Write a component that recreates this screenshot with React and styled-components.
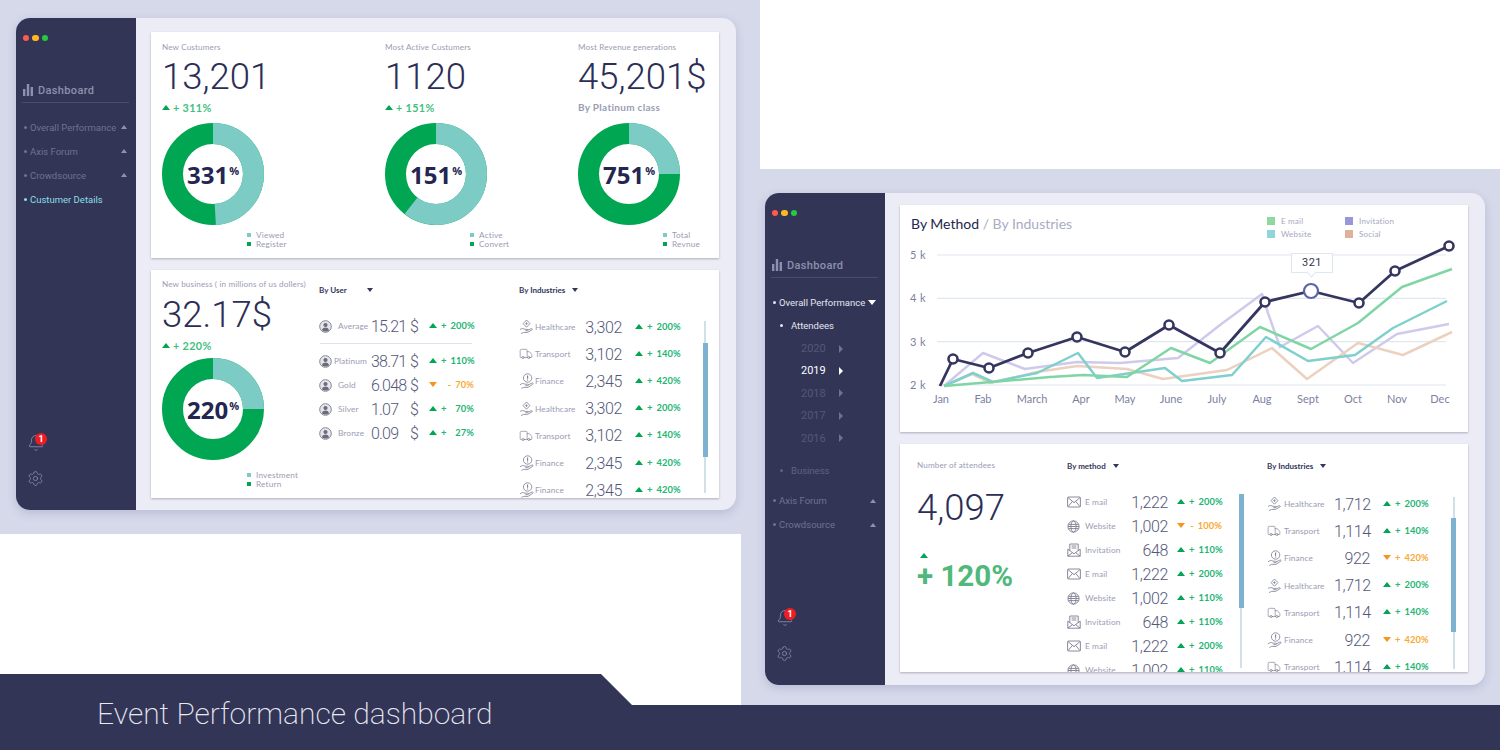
import React from 'react'
import styled, { createGlobalStyle } from 'styled-components'
import { Bell, Settings, Truck } from 'lucide-react'

const GlobalStyle = createGlobalStyle`
html, body {
  margin: 0;
  padding: 0;
  overflow: hidden;
  font-family: "Lato", "Liberation Sans", sans-serif;
}
`

const Stage = styled.div`
width: 1500px;
height: 750px;
background: #d6d9ea;
display: grid;
grid-template-columns: 741px 19px 740px;
grid-template-rows: 169px 365px 140px 31px 45px;
overflow: hidden;
`

const WhiteTop = styled.div`
grid-column: 3;
grid-row: 1;
background: #fff;
`

const WhiteBottom = styled.div`
grid-column: 1;
grid-row: 3 / 5;
background: #fff;
`

const Banner = styled.div`
grid-column: 1 / 4;
grid-row: 4 / 6;
background: #333557;
clip-path: polygon(0 0, 601px 0, 632px 31px, 100% 31px, 100% 100%, 0 100%);
color: #e8e9f2;
font-family: "Roboto", sans-serif;
font-weight: 200;
font-size: 30px;
line-height: 36px;
padding: 22px 0 0 97px;
`

const Window = styled.div`
grid-column: ${p => p.$col};
grid-row: ${p => p.$row};
margin: ${p => p.$margin};
width: 720px;
height: 492px;
align-self: start;
justify-self: start;
display: flex;
border-radius: 14px;
overflow: hidden;
background: #ebecf5;
box-shadow: 0 3px 10px rgba(80, 85, 130, 0.22);
z-index: 1;
`

const Sidebar = styled.div`
width: 120px;
box-sizing: border-box;
background: #333557;
padding: 17px 7px 0 6px;
display: flex;
flex-direction: column;
font-family: "Roboto", sans-serif;
`

const Dots = styled.div`
display: flex;
gap: 3px;
margin-left: 1px;
`

const Dot = styled.span`
width: 6.4px;
height: 6.4px;
border-radius: 50%;
background: ${p => p.$color};
`

const NavTitle = styled.div`
margin-top: 37px;
height: 24px;
display: flex;
align-items: center;
gap: 5px;
padding-left: 1px;
border-bottom: 1px solid #494b70;
color: #8e90ad;
font-size: 11px;
font-weight: 500;
letter-spacing: 0.35px;
`

const Menu = styled.div`
margin-top: 12px;
display: flex;
flex-direction: column;
`

const MenuItem = styled.div`
height: ${p => p.$height || 24}px;
margin-top: ${p => p.$top || 0}px;
padding-left: ${p => p.$indent || 2}px;
display: flex;
align-items: center;
font-size: 9.5px;
white-space: nowrap;
color: ${p => p.$color || '#6f7192'};
`

const Bullet = styled.span`
width: 3px;
height: 3px;
border-radius: 50%;
background: currentColor;
margin-right: ${p => p.$gap || 3}px;
flex-shrink: 0;
`

const Triangle = styled.span`
display: inline-block;
width: 0;
height: 0;
flex-shrink: 0;
${p => p.$dir === 'right' ? `
  border-top: 4px solid transparent;
  border-bottom: 4px solid transparent;
  border-left: 4px solid ${p.$color};
` : `
  border-left: ${p.$size}px solid transparent;
  border-right: ${p.$size}px solid transparent;
  border-${p.$dir === 'up' ? 'bottom' : 'top'}: ${p.$size + 1}px solid ${p.$color};
`}
`

const MenuCaret = styled.span`
margin-left: auto;
margin-right: 2px;
display: flex;
`

const Year = styled.div`
height: 22.4px;
padding-left: 30px;
display: flex;
align-items: center;
gap: 13px;
font-size: 11px;
color: ${p => (p.$on ? '#ffffff' : '#55577a')};
`

const SideBottom = styled.div`
margin-top: auto;
padding: 0 0 23px 5px;
display: flex;
flex-direction: column;
gap: 18px;
color: #8e90ad;
`

const BellWrap = styled.div`
position: relative;
width: 18px;
height: 18px;
`

const Badge = styled.span`
position: absolute;
left: 8px;
top: -1px;
width: 12px;
height: 12px;
border-radius: 50%;
background: #f01c24;
color: #fff;
font-size: 9px;
font-weight: 700;
line-height: 12px;
text-align: center;
`

const Main = styled.div`
flex: 1;
padding: ${p => p.$top}px 17px 0 15px;
display: flex;
flex-direction: column;
gap: 12px;
`

const Card = styled.div`
height: ${p => p.$height}px;
flex-shrink: 0;
background: #fff;
box-shadow: 0 1px 2px rgba(60, 60, 80, 0.35);
overflow: hidden;
position: relative;
`

const StatGrid = styled.div`
height: 100%;
display: grid;
grid-template-columns: ${p => p.$cols};
padding-left: ${p => p.$pad || 11}px;
`

const Column = styled.div`
display: flex;
flex-direction: column;
min-width: 0;
`

const Label = styled.div`
padding-top: ${p => p.$top || 9}px;
font-size: 8.1px;
line-height: 12px;
color: #9a9cb5;
letter-spacing: 0.15px;
white-space: nowrap;
`

const BigNumber = styled.div`
margin-top: ${p => p.$top || 6}px;
font-family: "Roboto", sans-serif;
font-weight: 300;
font-size: 36.5px;
line-height: 36px;
color: #2b2e55;
white-space: nowrap;
`

const Delta = styled.div`
margin-top: 5px;
height: 14px;
display: flex;
align-items: center;
gap: 3px;
font-size: 10.8px;
font-weight: 700;
letter-spacing: 0.35px;
color: #3fbf7f;
`

const SubNote = styled.div`
margin-top: 5px;
height: 14px;
line-height: 14px;
font-size: 10px;
font-weight: 700;
letter-spacing: 0.3px;
color: #9a9cb5;
`

const DonutWrap = styled.div`
position: relative;
width: 102px;
height: 102px;
margin-top: ${p => p.$top}px;
`

const DonutText = styled.div`
position: absolute;
inset: 0;
display: flex;
align-items: center;
justify-content: center;
font-family: "Open Sans", sans-serif;
font-weight: 700;
font-size: 24px;
color: #232650;
`

const Percent = styled.span`
font-size: 11px;
font-weight: 700;
margin: -7px 0 0 1px;
`

const Legend = styled.div`
margin: ${p => p.$top || 5}px 0 0 85px;
display: flex;
flex-direction: column;
`

const LegendRow = styled.div`
height: 9px;
display: flex;
align-items: center;
gap: 5px;
font-size: 8.2px;
color: #9a9cb5;
letter-spacing: 0.2px;
`

const LegendMark = styled.span`
width: 4px;
height: 4px;
background: ${p => p.$color};
`

const DropHead = styled.div`
padding-top: ${p => p.$top || 14}px;
height: 12px;
display: flex;
align-items: center;
gap: ${p => p.$gap || 7}px;
font-size: 8px;
font-weight: 700;
color: #34365a;
white-space: nowrap;
`

const ListArea = styled.div`
margin-top: ${p => p.$top}px;
display: flex;
align-items: flex-start;
`

const Rows = styled.div`
width: ${p => p.$width}px;
flex-shrink: 0;
`

const Row = styled.div`
height: ${p => p.$height}px;
display: grid;
grid-template-columns: ${p => p.$cols};
align-items: center;
color: #9a9cb5;
font-size: 8.3px;
letter-spacing: 0.1px;
white-space: nowrap;
`

const RowIcon = styled.span`
display: flex;
color: #7b7d90;
`

const RowLabel = styled.span`
padding-left: ${p => p.$pad || 0}px;
`

const Amount = styled.span`
font-family: "Roboto", sans-serif;
font-weight: 300;
font-size: 16px;
letter-spacing: -0.35px;
color: #55587a;
text-align: right;
`

const Money = styled(Amount)`
display: flex;
justify-content: space-between;
letter-spacing: -0.8px;
`

const RowDelta = styled.span`
display: flex;
align-items: center;
gap: 4px;
margin: 0 0 2px ${p => p.$gap}px;
font-size: 9.3px;
font-weight: 700;
color: ${p => (p.$down ? '#f7a934' : '#22b573')};
`

const DeltaText = styled.span`
width: 33px;
display: flex;
justify-content: ${p => (p.$joined ? 'flex-end' : 'space-between')};
gap: 4px;
`

const Divider = styled.div`
width: 152px;
height: 1px;
background: #dde3ec;
margin: 5px 0 5px 1px;
`

const Track = styled.div`
position: relative;
width: 2px;
height: ${p => p.$height}px;
margin-top: ${p => p.$top}px;
background: #cfe0e8;
`

const Thumb = styled.div`
position: absolute;
left: -1.5px;
top: ${p => p.$top}px;
width: 5px;
height: 114px;
background: #7db3d0;
`

const TitleRow = styled.div`
height: 35px;
box-sizing: border-box;
padding: 9px 0 0 11px;
display: grid;
grid-template-columns: 356px 1fr;
`

const Title = styled.div`
font-size: 14px;
line-height: 20px;
color: #24264c;
`

const TitleDim = styled.span`
color: #a9abc5;
`

const ChartLegend = styled.div`
display: grid;
grid-template-columns: 78px 1fr;
grid-auto-rows: 13.5px;
`

const ChartKey = styled.div`
display: flex;
align-items: center;
gap: 6px;
font-size: 8px;
letter-spacing: 0.2px;
color: #a5a7c2;
`

const KeySwatch = styled.span`
width: 8px;
height: 8px;
background: ${p => p.$color};
`

const ChartBox = styled.div`
position: relative;
height: 192px;
`

const ChartSvg = styled.svg`
display: block;
`

const Tip = styled.div`
position: absolute;
left: 391px;
top: 13px;
width: 42px;
height: 20px;
box-sizing: border-box;
border: 1px solid #dfe7ef;
background: #fff;
font-family: "Roboto", sans-serif;
font-size: 11px;
line-height: 18px;
letter-spacing: 0.5px;
text-align: center;
color: #33354f;
&::after {
  content: '';
  position: absolute;
  left: 16px;
  bottom: -4px;
  width: 6px;
  height: 6px;
  background: #fff;
  border-right: 1px solid #dfe7ef;
  border-bottom: 1px solid #dfe7ef;
  transform: rotate(45deg);
}
`

const HugeDelta = styled.div`
font-family: "Roboto", sans-serif;
font-weight: 700;
font-size: 29.5px;
line-height: 32px;
margin-top: 2px;
color: #4fb87a;
white-space: nowrap;
`

const ArrowSlot = styled.div`
margin: 27px 0 0 3px;
display: flex;
`

const TEAL = '#7ccbc4'
const GREEN = '#00a651'

const BarsIcon = () => (
  <svg width="10" height="12" viewBox="0 0 10 12" fill="#8e90ad">
    <rect x="0" y="5" width="2.4" height="7" />
    <rect x="3.8" y="0" width="2.4" height="12" />
    <rect x="7.6" y="3" width="2.4" height="9" />
  </svg>
)

const PersonIcon = () => (
  <svg width="13" height="13" viewBox="0 0 13 13">
    <circle cx="6.5" cy="6.5" r="5.8" fill="#e6e6ea" stroke="#77798a" strokeWidth="0.9" />
    <circle cx="6.5" cy="5" r="2.1" fill="#6b6d7e" />
    <path d="M2.9 10.2c.6-1.9 2-2.6 3.6-2.6s3 .7 3.6 2.6c-2 1.6-5.2 1.6-7.2 0z" fill="#6b6d7e" />
  </svg>
)

const HealthIcon = () => (
  <svg width="15" height="16" viewBox="0 0 15 16" fill="none" stroke="#7b7d90" strokeWidth="0.8">
    <path d="M7.5 1l3.4 3.6-3.4 3.6-3.4-3.6z" />
    <path d="M7.5 3.4v2.4M6.3 4.6h2.4" />
    <path d="M1 10.4c2-1.2 3.6-.9 5 0h2.4c1 0 1 1.3 0 1.3H6.4" />
    <path d="M8.6 11.2l3.6-1.5c1.1-.4 1.6.7.7 1.2l-4.4 2.5H4.6L2 14.6" />
  </svg>
)

const FinanceIcon = () => (
  <svg width="16" height="16" viewBox="0 0 16 16" fill="none" stroke="#7b7d90" strokeWidth="0.8">
    <circle cx="8.6" cy="5" r="4.2" />
    <path d="M8.6 2.6v3.2M8.6 6.6v.8" strokeWidth="1.1" />
    <path d="M1 12c1.6-1.8 3.4-1.8 5-.8h2.6c1 0 1 1.4 0 1.4H6.4" />
    <path d="M9 12l3.9-1.9c1.1-.5 1.6.7.7 1.3l-4.6 3H4.6L2.4 15.4" />
  </svg>
)

const TruckIcon = () => <Truck size={14} strokeWidth={1.1} />

const MailIcon = () => (
  <svg width="14" height="12" viewBox="0 0 14 12" fill="none" stroke="#7b7d90" strokeWidth="0.9">
    <rect x="0.6" y="1" width="12.8" height="10" rx="0.8" />
    <path d="M1 1.6l6 5 6-5M1 10.6l4.4-5.2M13 10.6L8.6 5.4" />
  </svg>
)

const GlobeIcon = () => (
  <svg width="13" height="13" viewBox="0 0 13 13" fill="none" stroke="#7b7d90" strokeWidth="0.9">
    <circle cx="6.5" cy="6.5" r="5.6" />
    <ellipse cx="6.5" cy="6.5" rx="2.6" ry="5.6" />
    <path d="M1.4 4.4h10.2M1 6.5h11M1.4 8.6h10.2" />
  </svg>
)

const InviteIcon = () => (
  <svg width="14" height="14" viewBox="0 0 14 14" fill="none" stroke="#7b7d90" strokeWidth="0.9">
    <path d="M0.8 6.2v7h12.4v-7" />
    <path d="M2.8 7.6V1h8.4v6.6" />
    <path d="M0.8 6.2l6.2 4.6 6.2-4.6M0.8 13.2l4.6-3.6M13.2 13.2L8.6 9.6" />
    <path d="M4.6 3h4.8M4.6 5h4.8" />
  </svg>
)

const Donut = ({ share, value, top = 9 }) => {
  const r = 40.5
  const full = 2 * Math.PI * r
  return (
    <DonutWrap $top={top}>
      <svg width="102" height="102" viewBox="0 0 102 102">
        <circle cx="51" cy="51" r={r} fill="none" stroke={GREEN} strokeWidth="21" />
        <circle
          cx="51"
          cy="51"
          r={r}
          fill="none"
          stroke={TEAL}
          strokeWidth="21"
          strokeDasharray={`${full * share} ${full}`}
          transform="rotate(-90 51 51)"
        />
      </svg>
      <DonutText>{value}<Percent>%</Percent></DonutText>
    </DonutWrap>
  )
}

const DonutLegend = ({ top, names }) => (
  <Legend $top={top}>
    <LegendRow><LegendMark $color={TEAL} />{names[0]}</LegendRow>
    <LegendRow><LegendMark $color={GREEN} />{names[1]}</LegendRow>
  </Legend>
)

const UpDelta = ({ text }) => (
  <Delta><Triangle $dir="up" $size={4.5} $color={GREEN} />{text}</Delta>
)

const ListDelta = ({ down, sign, pct, gap }) => (
  <RowDelta $down={down} $gap={gap}>
    <Triangle $dir={down ? 'down' : 'up'} $size={4} $color={down ? '#f7931e' : GREEN} />
    <DeltaText $joined={sign === '-'}><span>{sign}</span><span>{pct}</span></DeltaText>
  </RowDelta>
)

const SideMenuLeft = () => (
  <Menu>
    <MenuItem><Bullet />Overall Performance<MenuCaret><Triangle $dir="up" $size={3.5} $color="#8e90ad" /></MenuCaret></MenuItem>
    <MenuItem><Bullet />Axis Forum<MenuCaret><Triangle $dir="up" $size={3.5} $color="#8e90ad" /></MenuCaret></MenuItem>
    <MenuItem><Bullet />Crowdsource<MenuCaret><Triangle $dir="up" $size={3.5} $color="#8e90ad" /></MenuCaret></MenuItem>
    <MenuItem $color="#8adfe6"><Bullet />Custumer Details</MenuItem>
  </Menu>
)

const years = [
  { year: '2020' },
  { year: '2019', on: true },
  { year: '2018' },
  { year: '2017' },
  { year: '2016' },
]

const SideMenuRight = () => (
  <Menu>
    <MenuItem $color="#e4e5ef"><Bullet />Overall Performance<MenuCaret><Triangle $dir="down" $size={4} $color="#fff" /></MenuCaret></MenuItem>
    <MenuItem $height={23} $indent={9} $color="#e4e5ef"><Bullet $gap={8} />Attendees</MenuItem>
    {years.map(y => (
      <Year key={y.year} $on={y.on}>
        {y.year}<Triangle $dir="right" $color={y.on ? '#fff' : '#6f7192'} />
      </Year>
    ))}
    <MenuItem $top={9.5} $indent={9} $color="#5f6185"><Bullet $gap={8} />Business</MenuItem>
    <MenuItem $top={6}><Bullet />Axis Forum<MenuCaret><Triangle $dir="up" $size={3.5} $color="#8e90ad" /></MenuCaret></MenuItem>
    <MenuItem><Bullet />Crowdsource<MenuCaret><Triangle $dir="up" $size={3.5} $color="#8e90ad" /></MenuCaret></MenuItem>
  </Menu>
)

const SideBar = ({ children }) => (
  <Sidebar>
    <Dots>
      <Dot $color="#ff5a4f" />
      <Dot $color="#fdb822" />
      <Dot $color="#27c93f" />
    </Dots>
    <NavTitle><BarsIcon />Dashboard</NavTitle>
    {children}
    <SideBottom>
      <BellWrap>
        <Bell size={18} strokeWidth={1.1} />
        <Badge>1</Badge>
      </BellWrap>
      <Settings size={17} strokeWidth={1.1} />
    </SideBottom>
  </Sidebar>
)

const userRows = [
  { name: 'Platinum', pad: 1, amount: '38.71', pct: '110%' },
  { name: 'Gold', pad: 5, amount: '6.048', pct: '70%', sign: '-', down: true },
  { name: 'Silver', pad: 5, amount: '1.07', pct: '70%' },
  { name: 'Bronze', pad: 5, amount: '0.09', pct: '27%' },
]

const UserRow = ({ name, pad, amount, pct, sign = '+', down }) => (
  <Row $height={24} $cols="14px 38px 47px auto">
    <RowIcon><PersonIcon /></RowIcon>
    <RowLabel $pad={pad}>{name}</RowLabel>
    <Money><span>{amount}</span><span>$</span></Money>
    <ListDelta down={down} sign={sign} pct={pct} gap={11} />
  </Row>
)

const businessIndustries = [
  { Icon: HealthIcon, name: 'Healthcare', amount: '3,302', pct: '200%' },
  { Icon: TruckIcon, name: 'Transport', amount: '3,102', pct: '140%' },
  { Icon: FinanceIcon, name: 'Finance', amount: '2,345', pct: '420%' },
  { Icon: HealthIcon, name: 'Healthcare', amount: '3,302', pct: '200%' },
  { Icon: TruckIcon, name: 'Transport', amount: '3,102', pct: '140%' },
  { Icon: FinanceIcon, name: 'Finance', amount: '2,345', pct: '420%' },
  { Icon: FinanceIcon, name: 'Finance', amount: '2,345', pct: '420%' },
]

const methodRows = [
  { Icon: MailIcon, name: 'E mail', amount: '1,222', pct: '200%' },
  { Icon: GlobeIcon, name: 'Website', amount: '1,002', pct: '100%', sign: '-', down: true },
  { Icon: InviteIcon, name: 'Invitation', amount: '648', pct: '110%' },
  { Icon: MailIcon, name: 'E mail', amount: '1,222', pct: '200%' },
  { Icon: GlobeIcon, name: 'Website', amount: '1,002', pct: '110%' },
  { Icon: InviteIcon, name: 'Invitation', amount: '648', pct: '110%' },
  { Icon: MailIcon, name: 'E mail', amount: '1,222', pct: '200%' },
  { Icon: GlobeIcon, name: 'Website', amount: '1,002', pct: '110%' },
]

const attendeeIndustries = [
  { Icon: HealthIcon, name: 'Healthcare', amount: '1,712', pct: '200%' },
  { Icon: TruckIcon, name: 'Transport', amount: '1,114', pct: '140%' },
  { Icon: FinanceIcon, name: 'Finance', amount: '922', pct: '420%', down: true },
  { Icon: HealthIcon, name: 'Healthcare', amount: '1,712', pct: '200%' },
  { Icon: TruckIcon, name: 'Transport', amount: '1,114', pct: '140%' },
  { Icon: FinanceIcon, name: 'Finance', amount: '922', pct: '420%', down: true },
  { Icon: TruckIcon, name: 'Transport', amount: '1,114', pct: '140%' },
]

const DataRow = ({ Icon, name, amount, pct, sign = '+', down, height, cols, gap }) => (
  <Row $height={height} $cols={cols}>
    <RowIcon><Icon /></RowIcon>
    <RowLabel>{name}</RowLabel>
    <Amount>{amount}</Amount>
    <ListDelta down={down} sign={sign} pct={pct} gap={gap} />
  </Row>
)

const toPoints = list => list.map(p => p.join(',')).join(' ')

const navy = [[940, 386], [953, 359], [989, 368], [1028, 353], [1077, 337], [1125, 352], [1169, 325], [1220, 353], [1265, 302], [1311, 291], [1359, 303], [1395, 271], [1449, 246]]

const seriesLines = [
  { color: '#cfcaec', points: [[944, 386], [983, 353], [1025, 369], [1077, 362], [1120, 363], [1178, 358], [1220, 325], [1262, 294], [1268, 313], [1280, 347], [1318, 326], [1353, 363], [1397, 334], [1449, 324]] },
  { color: '#ecd0c0', points: [[944, 386], [972, 374], [990, 383], [1037, 372], [1077, 366], [1127, 369], [1163, 379], [1227, 370], [1272, 348], [1307, 379], [1358, 343], [1403, 355], [1452, 332]] },
  { color: '#7fd0cd', points: [[944, 386], [973, 373], [993, 382], [1037, 373], [1078, 353], [1097, 378], [1165, 368], [1182, 381], [1232, 375], [1266, 337], [1308, 361], [1355, 355], [1393, 328], [1447, 301]] },
  { color: '#7fd6a4', points: [[944, 386], [1050, 377], [1083, 375], [1127, 377], [1171, 348], [1210, 363], [1260, 327], [1311, 349], [1358, 323], [1402, 287], [1452, 269]] },
]

const months = [['Jan', 941], ['Fab', 983], ['March', 1032], ['Apr', 1081], ['May', 1125], ['June', 1171], ['July', 1217], ['Aug', 1262], ['Sept', 1308], ['Oct', 1353], ['Nov', 1397], ['Dec', 1440]]
const levels = [['5 k', 255], ['4 k', 298.4], ['3 k', 341.7], ['2 k', 385]]

const LineChart = () => (
  <ChartBox>
    <ChartSvg width="568" height="192" viewBox="900 240 568 192" fontFamily="Lato, sans-serif" fontSize="11" fill="#7d7f9f">
      {levels.map(([name, y]) => (
        <g key={name}>
          <line x1="937" x2="1446" y1={y} y2={y} stroke="#dfe7ef" strokeWidth="1.2" />
          <text x="910" y={y + 4} letterSpacing="0.4">{name}</text>
        </g>
      ))}
      {months.map(([name, x]) => (
        <text key={name} x={x} y="403" textAnchor="middle">{name}</text>
      ))}
      {seriesLines.map(s => (
        <polyline key={s.color} points={toPoints(s.points)} fill="none" stroke={s.color} strokeWidth="2.5" strokeLinejoin="round" />
      ))}
      <polyline points={toPoints(navy)} fill="none" stroke="#34365f" strokeWidth="2.8" strokeLinejoin="round" />
      {navy.slice(1).map(([x, y]) => (
        x === 1311
          ? <circle key={x} cx={x} cy={y} r="7" fill="#fff" stroke="#5c64a8" strokeWidth="2.2" />
          : <circle key={x} cx={x} cy={y} r="4.5" fill="#fff" stroke="#34365f" strokeWidth="2.6" />
      ))}
    </ChartSvg>
    <Tip>321</Tip>
  </ChartBox>
)

export default function App() {
  return (
    <Stage>
      <GlobalStyle />
      <WhiteTop />
      <WhiteBottom />
      <Banner>Event Performance dashboard</Banner>

      <Window $col="1 / 3" $row="1 / 3" $margin="18px 0 0 16px">
        <SideBar><SideMenuLeft /></SideBar>
        <Main $top={14}>
          <Card $height={226}>
            <StatGrid $cols="223px 193px 1fr">
              <Column>
                <Label>New Custumers</Label>
                <BigNumber>13,201</BigNumber>
                <UpDelta text="+ 311%" />
                <Donut share={0.49} value="331" />
                <DonutLegend names={['Viewed', 'Register']} />
              </Column>
              <Column>
                <Label>Most Active Custumers</Label>
                <BigNumber>1120</BigNumber>
                <UpDelta text="+ 151%" />
                <Donut share={0.605} value="151" />
                <DonutLegend names={['Active', 'Convert']} />
              </Column>
              <Column>
                <Label>Most Revenue generations</Label>
                <BigNumber>45,201$</BigNumber>
                <SubNote>By Platinum class</SubNote>
                <Donut share={0.25} value="751" />
                <DonutLegend names={['Total', 'Revnue']} />
              </Column>
            </StatGrid>
          </Card>
          <Card $height={228}>
            <StatGrid $cols="157px 200px 1fr">
              <Column>
                <Label $top={8}>New business ( in millions of us dollers)</Label>
                <BigNumber $top={7}>32.17$</BigNumber>
                <UpDelta text="+ 220%" />
                <Donut share={0.25} value="220" top={6} />
                <DonutLegend top={10} names={['Investment', 'Return']} />
              </Column>
              <Column>
                <DropHead $gap={20}>By User<Triangle $dir="down" $size={3.5} $color="#34365a" /></DropHead>
                <ListArea $top={18}>
                  <Rows $width={160}>
                    <UserRow name="Average" pad={5} amount="15.21" pct="200%" />
                    <Divider />
                    {userRows.map(r => <UserRow key={r.name} {...r} />)}
                  </Rows>
                </ListArea>
              </Column>
              <Column>
                <DropHead>By Industries<Triangle $dir="down" $size={3.5} $color="#34365a" /></DropHead>
                <ListArea $top={17.5}>
                  <Rows $width={185}>
                    {businessIndustries.map((r, i) => (
                      <DataRow key={i} {...r} height={27.2} cols="16px 48px 39px auto" gap={13} />
                    ))}
                  </Rows>
                  <Track $top={7.5} $height={172}><Thumb $top={22} /></Track>
                </ListArea>
              </Column>
            </StatGrid>
          </Card>
        </Main>
      </Window>

      <Window $col="3" $row="2 / 5" $margin="24px 0 0 5px">
        <SideBar><SideMenuRight /></SideBar>
        <Main $top={12}>
          <Card $height={227}>
            <TitleRow>
              <Title>By Method <TitleDim>/ By Industries</TitleDim></Title>
              <ChartLegend>
                <ChartKey><KeySwatch $color="#8fd9a0" />E mail</ChartKey>
                <ChartKey><KeySwatch $color="#9a96d8" />Invitation</ChartKey>
                <ChartKey><KeySwatch $color="#8ed6d8" />Website</ChartKey>
                <ChartKey><KeySwatch $color="#dfb09a" />Social</ChartKey>
              </ChartLegend>
            </TitleRow>
            <LineChart />
          </Card>
          <Card $height={228}>
            <StatGrid $cols="150px 200px 1fr" $pad={17}>
              <Column>
                <Label $top={15}>Number of attendees</Label>
                <BigNumber $top={19}>4,097</BigNumber>
                <ArrowSlot><Triangle $dir="up" $size={4} $color={GREEN} /></ArrowSlot>
                <HugeDelta>+ 120%</HugeDelta>
              </Column>
              <Column>
                <DropHead $top={16}>By method<Triangle $dir="down" $size={3.5} $color="#34365a" /></DropHead>
                <ListArea $top={18}>
                  <Rows $width={173}>
                    {methodRows.map((r, i) => (
                      <DataRow key={i} {...r} height={24} cols="18px 46px 37px auto" gap={9} />
                    ))}
                  </Rows>
                  <Track $top={4} $height={174}><Thumb $top={0} /></Track>
                </ListArea>
              </Column>
              <Column>
                <DropHead $top={16}>By Industries<Triangle $dir="down" $size={3.5} $color="#34365a" /></DropHead>
                <ListArea $top={18.5}>
                  <Rows $width={185.5}>
                    {attendeeIndustries.map((r, i) => (
                      <DataRow key={i} {...r} height={27.2} cols="17px 50px 36px auto" gap={13} />
                    ))}
                  </Rows>
                  <Track $top={6.5} $height={172}><Thumb $top={21} /></Track>
                </ListArea>
              </Column>
            </StatGrid>
          </Card>
        </Main>
      </Window>
    </Stage>
  )
}
